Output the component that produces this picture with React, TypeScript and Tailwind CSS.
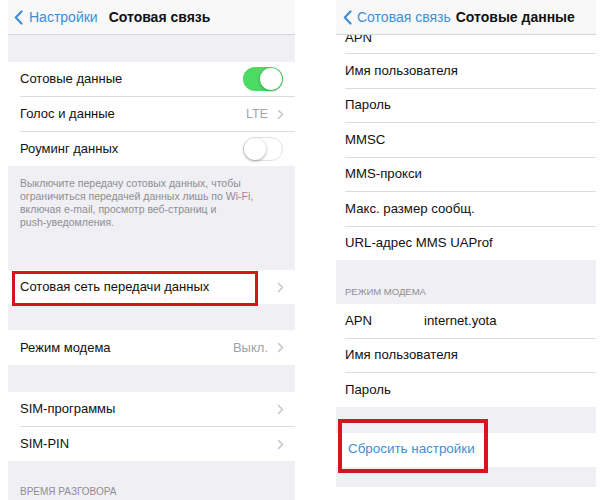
import React from "react";

const font = { fontFamily: '"Liberation Sans", Arial, sans-serif' };

function Chevron() {
  return (
    <svg width="7" height="11" viewBox="0 0 7 11" className="shrink-0">
      <polyline points="1.5,1.5 5.5,5.5 1.5,9.5" fill="none" stroke="#c7c7cc" strokeWidth="1.6" strokeLinecap="round" strokeLinejoin="round" />
    </svg>
  );
}

function BackChevron() {
  return (
    <svg width="9" height="15" viewBox="0 0 9 15" className="shrink-0">
      <polyline points="7.5,1.5 1.8,7.5 7.5,13.5" fill="none" stroke="#3d8fd6" strokeWidth="2.2" strokeLinecap="round" strokeLinejoin="round" />
    </svg>
  );
}

function Toggle({ on }: { on: boolean }) {
  return on ? (
    <div className="w-[40px] h-[24px] rounded-full bg-[#4cd964] relative">
      <div className="absolute right-[1px] top-[1px] w-[22px] h-[22px] rounded-full bg-white shadow-[0_1px_3px_rgba(0,0,0,0.3)]" />
    </div>
  ) : (
    <div className="w-[40px] h-[24px] rounded-full bg-white border border-[#e1e1e6] relative">
      <div className="absolute left-[0px] top-[0px] w-[22px] h-[22px] rounded-full bg-white shadow-[0_1px_3px_rgba(0,0,0,0.35)]" />
    </div>
  );
}

function Sep({ inset }: { inset: string }) {
  return (
    <div className="bg-white">
      <div className={`${inset} h-px bg-[#dcdce0]`} />
    </div>
  );
}

function LeftPanel() {
  return (
    <div className="w-[287px] h-[500px] bg-[#efeff4] flex flex-col overflow-hidden">
      <div className="h-[35px] shrink-0 bg-[#f8f8f9] border-b border-[#d6d6da] flex items-center pl-[6px]">
        <BackChevron />
        <span className="ml-[6px] text-[14px] text-[#3d8fd6]">Настройки</span>
        <span className="ml-[11px] text-[14px] font-bold text-[#111]">Сотовая связь</span>
      </div>
      <div className="h-[27px] shrink-0" />
      <div className="bg-white flex flex-col shrink-0">
        <div className="h-[34px] flex items-center pl-[12px] pr-[12px]">
          <span className="flex-1 text-[13px] text-[#111]">Сотовые данные</span>
          <Toggle on />
        </div>
        <Sep inset="ml-[12px]" />
        <div className="h-[34px] flex items-center pl-[12px] pr-[11px]">
          <span className="flex-1 text-[13px] text-[#111]">Голос и данные</span>
          <span className="text-[12.5px] text-[#a2a2a8] mr-[9px]">LTE</span>
          <Chevron />
        </div>
        <Sep inset="ml-[12px]" />
        <div className="h-[34px] flex items-center pl-[12px] pr-[12px]">
          <span className="flex-1 text-[13px] text-[#111]">Роуминг данных</span>
          <Toggle on={false} />
        </div>
      </div>
      <div className="h-[104px] shrink-0 pl-[12px] pt-[11px] text-[10.5px] leading-[13px] text-[#8e8e93]">
        Выключите передачу сотовых данных, чтобы
        <br />
        ограничиться передачей данных лишь по Wi-Fi,
        <br />
        включая e-mail, просмотр веб-страниц и
        <br />
        push-уведомления.
      </div>
      <div className="h-[34px] shrink-0 bg-white relative flex items-center pl-[12px] pr-[11px]">
        <span className="flex-1 text-[13px] text-[#111]">Сотовая сеть передачи данных</span>
        <Chevron />
        <div className="absolute left-[4px] top-[1px] w-[246px] h-[35px] border-[3px] border-[#d8141f]" />
      </div>
      <div className="h-[26px] shrink-0" />
      <div className="h-[35px] shrink-0 bg-white flex items-center pl-[12px] pr-[11px]">
        <span className="flex-1 text-[13px] text-[#111]">Режим модема</span>
        <span className="text-[13px] text-[#a2a2a8] mr-[9px]">Выкл.</span>
        <Chevron />
      </div>
      <div className="h-[27px] shrink-0" />
      <div className="bg-white flex flex-col shrink-0">
        <div className="h-[34px] flex items-center pl-[12px] pr-[11px]">
          <span className="flex-1 text-[13px] text-[#111]">SIM-программы</span>
          <Chevron />
        </div>
        <Sep inset="ml-[12px]" />
        <div className="h-[34px] flex items-center pl-[12px] pr-[11px]">
          <span className="flex-1 text-[13px] text-[#111]">SIM-PIN</span>
          <Chevron />
        </div>
      </div>
      <div className="pl-[12px] pt-[25px] text-[10px] text-[#8e8e93] leading-[12px]">ВРЕМЯ РАЗГОВОРА</div>
    </div>
  );
}

function RRow({ children }: { children: React.ReactNode }) {
  return <div className="h-[33.5px] flex items-center pl-[9px] text-[13.2px] text-[#111] bg-white">{children}</div>;
}

function RightPanel() {
  return (
    <div className="w-[260px] h-[500px] flex flex-col">
      <div className="h-[487px] bg-[#efeff4] flex flex-col overflow-hidden">
        <div className="h-[35px] shrink-0 bg-[#f8f8f9] border-b border-[#d6d6da] flex items-center pl-[7px]">
          <BackChevron />
          <span className="ml-[5px] text-[14px] text-[#3d8fd6]">Сотовая связь</span>
          <span className="ml-[5px] text-[14px] font-bold text-[#111]">Сотовые данные</span>
        </div>
        <div className="h-[18px] shrink-0 bg-white overflow-hidden pl-[9px]">
          <div className="-mt-[14px] h-[33px] leading-[33px] text-[13.2px] text-[#111]">APN</div>
        </div>
        <div className="bg-white flex flex-col shrink-0">
          <Sep inset="ml-[9px]" />
          <RRow>Имя пользователя</RRow>
          <Sep inset="ml-[9px]" />
          <RRow>Пароль</RRow>
          <Sep inset="ml-[9px]" />
          <RRow>MMSC</RRow>
          <Sep inset="ml-[9px]" />
          <RRow>MMS-прокси</RRow>
          <Sep inset="ml-[9px]" />
          <RRow>Макс. размер сообщ.</RRow>
          <Sep inset="ml-[9px]" />
          <RRow>URL-адрес MMS UAProf</RRow>
        </div>
        <div className="h-[44px] shrink-0 flex items-end pl-[9px] pb-[7px] text-[9.5px] text-[#8e8e93] leading-[11px]">
          РЕЖИМ МОДЕМА
        </div>
        <div className="bg-white flex flex-col shrink-0">
          <RRow>
            <span className="w-[79px]">APN</span>
            <span>internet.yota</span>
          </RRow>
          <Sep inset="ml-[9px]" />
          <RRow>Имя пользователя</RRow>
          <Sep inset="ml-[9px]" />
          <RRow>Пароль</RRow>
        </div>
        <div className="h-[26px] shrink-0" />
        <div className="h-[34px] shrink-0 bg-white relative flex items-center pl-[12px] text-[13.4px] text-[#3d8fd6]">
          Сбросить настройки
          <div className="absolute left-[2px] -top-[14px] w-[150px] h-[54px] border-[4px] border-[#d8141f]" />
        </div>
      </div>
    </div>
  );
}

export default function App() {
  return (
    <div className="w-[600px] h-[500px] bg-white flex overflow-hidden" style={font}>
      <div className="ml-[8px]">
        <LeftPanel />
      </div>
      <div className="ml-[41px]">
        <RightPanel />
      </div>
    </div>
  );
}
